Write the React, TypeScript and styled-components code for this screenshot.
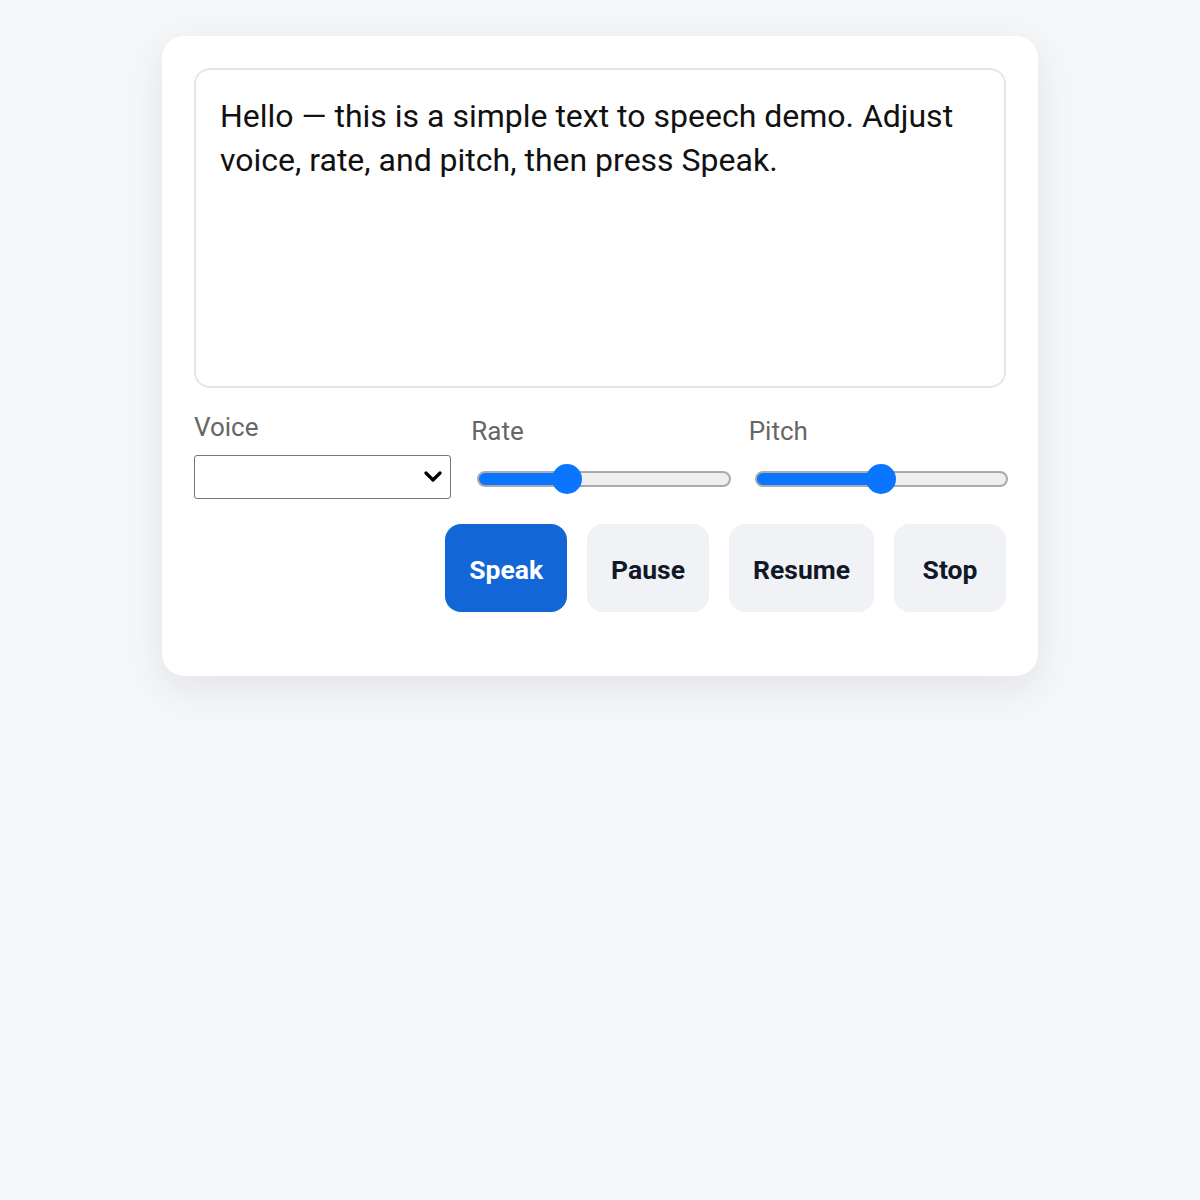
import React, { useState } from "react";
import styled, { createGlobalStyle } from "styled-components";

const GlobalStyle = createGlobalStyle`
  html, body {
    margin: 0;
    padding: 0;
    background: #f5f6f8;
    font-family: Roboto, "Liberation Sans", sans-serif;
  }
`;

const Page = styled.div`
  min-height: 1200px;
  padding-top: 36px;
  box-sizing: border-box;
`;

const Card = styled.main`
  width: 876px;
  margin: 0 auto;
  box-sizing: border-box;
  padding: 32px 32px 64px;
  background: #ffffff;
  border-radius: 22px;
  box-shadow: 0 12px 36px rgba(15, 23, 42, 0.08);
  display: flex;
  flex-direction: column;
`;

const TextArea = styled.textarea`
  display: block;
  width: 100%;
  height: 320px;
  box-sizing: border-box;
  padding: 24px 24px;
  border: 2px solid #e6e6e6;
  border-radius: 16px;
  resize: none;
  outline: none;
  font-family: Roboto, "Liberation Sans", sans-serif;
  font-size: 32px;
  line-height: 44px;
  color: #111111;
`;

const Controls = styled.div`
  display: grid;
  grid-template-columns: repeat(3, 1fr);
  column-gap: 20px;
  align-items: end;
  margin-top: 25px;
`;

const Field = styled.label`
  display: flex;
  flex-direction: column;
  gap: 14px;
`;

const FieldName = styled.span`
  font-size: 26px;
  line-height: 28px;
  color: #666666;
`;

const Select = styled.select`
  height: 44px;
  width: 100%;
  box-sizing: border-box;
  border: 1px solid #767676;
  border-radius: 3px;
  background: #ffffff;
  font-size: 20px;
  appearance: none;
  padding: 0 40px 0 10px;
  background-image: url("data:image/svg+xml;utf8,<svg xmlns='http://www.w3.org/2000/svg' width='20' height='12' viewBox='0 0 20 12'><path d='M3 2l7 7 7-7' fill='none' stroke='black' stroke-width='3.2' stroke-linecap='round' stroke-linejoin='round'/></svg>");
  background-repeat: no-repeat;
  background-position: right 7px center;
  background-size: 20px 12px;
`;

const Range = styled.input<{ $fill: number }>`
  -webkit-appearance: none;
  appearance: none;
  display: block;
  height: 40px;
  width: calc(100% - 4px);
  margin: 0 0 0 6px;
  background: transparent;

  &::-webkit-slider-runnable-track {
    height: 16px;
    border-radius: 8px;
    box-sizing: border-box;
    border: 2px solid #aaaaaa;
    background: linear-gradient(
      to right,
      #0a75ff 0%,
      #0a75ff ${(p) => p.$fill}%,
      #efefef ${(p) => p.$fill}%,
      #efefef 100%
    );
  }

  &::-webkit-slider-thumb {
    -webkit-appearance: none;
    width: 30px;
    height: 30px;
    margin-top: -9px;
    border-radius: 50%;
    background: #0a75ff;
    border: none;
  }
`;

const Actions = styled.div`
  display: flex;
  justify-content: flex-end;
  gap: 20px;
  margin-top: 25px;
`;

const Button = styled.button<{ $primary?: boolean }>`
  height: 88px;
  min-width: 112px;
  padding: 2px 24px 0;
  border: none;
  border-radius: 16px;
  font-family: Roboto, "Liberation Sans", sans-serif;
  font-size: 26.5px;
  font-weight: 700;
  cursor: pointer;
  background: ${(p) => (p.$primary ? "#1366d6" : "#f0f2f5")};
  color: ${(p) => (p.$primary ? "#ffffff" : "#111827")};
`;

// thumb travels over (width - thumb), so the fill stops at its centre
const fillAt = (value: number, min: number, max: number, width = 253, thumb = 30) => {
  const t = (value - min) / (max - min);
  return ((thumb / 2 + t * (width - thumb)) / width) * 100;
};

export default function App() {
  const [text, setText] = useState(
    "Hello — this is a simple text to speech demo. Adjust voice, rate, and pitch, then press Speak."
  );
  const [rate, setRate] = useState(1);
  const [pitch, setPitch] = useState(1);

  return (
    <Page>
      <GlobalStyle />
      <Card>
        <TextArea value={text} onChange={(e) => setText(e.target.value)} />
        <Controls>
          <Field>
            <FieldName>Voice</FieldName>
            <Select defaultValue="" />
          </Field>
          <Field>
            <FieldName>Rate</FieldName>
            <Range
              type="range"
              min={0.5}
              max={2}
              step={0.1}
              value={rate}
              $fill={fillAt(rate, 0.5, 2)}
              onChange={(e) => setRate(Number(e.target.value))}
            />
          </Field>
          <Field>
            <FieldName>Pitch</FieldName>
            <Range
              type="range"
              min={0}
              max={2}
              step={0.1}
              value={pitch}
              $fill={fillAt(pitch, 0, 2)}
              onChange={(e) => setPitch(Number(e.target.value))}
            />
          </Field>
        </Controls>
        <Actions>
          <Button $primary>Speak</Button>
          <Button>Pause</Button>
          <Button>Resume</Button>
          <Button>Stop</Button>
        </Actions>
      </Card>
    </Page>
  );
}
